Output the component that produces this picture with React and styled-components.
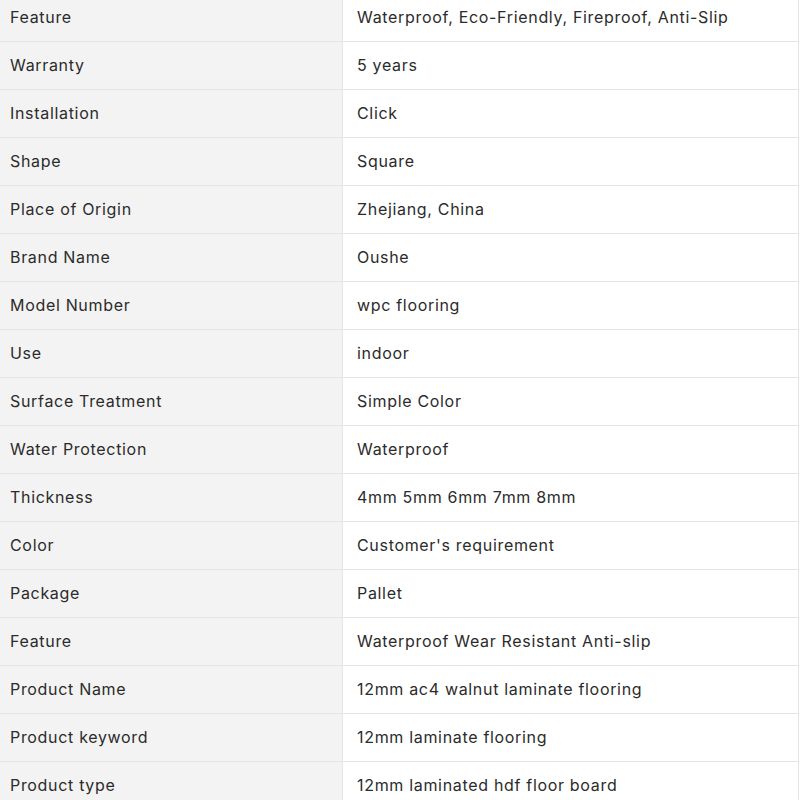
import React from "react";
import styled, { createGlobalStyle } from "styled-components";

const Global = createGlobalStyle`
  html, body { margin: 0; padding: 0; background: #fff; overflow: hidden; }
  body { font-family: Inter, "Noto Sans", sans-serif; }
`;

const Table = styled.div`
  width: 798px;
  margin-top: -6px;
  border-right: 1px solid #e6e6e6;
  display: grid;
  grid-template-columns: 343px 1fr;
`;

const Cell = styled.div`
  box-sizing: border-box;
  height: 48px;
  display: flex;
  align-items: center;
  padding-bottom: 1px;
  border-bottom: 1px solid #e4e4e4;
  font-size: 16px;
  font-weight: 400;
  letter-spacing: 0.68px;
  color: #2b2b2b;
  background: ${(p) => (p.$label ? "#f3f3f3" : "#fff")};
  padding-left: ${(p) => (p.$label ? "10px" : "14px")};
  border-right: ${(p) => (p.$label ? "1px solid #e6e6e6" : "none")};
  white-space: nowrap;
`;

const rows = [
  ["Feature", "Waterproof, Eco-Friendly, Fireproof, Anti-Slip"],
  ["Warranty", "5 years"],
  ["Installation", "Click"],
  ["Shape", "Square"],
  ["Place of Origin", "Zhejiang, China"],
  ["Brand Name", "Oushe"],
  ["Model Number", "wpc flooring"],
  ["Use", "indoor"],
  ["Surface Treatment", "Simple Color"],
  ["Water Protection", "Waterproof"],
  ["Thickness", "4mm 5mm 6mm 7mm 8mm"],
  ["Color", "Customer's requirement"],
  ["Package", "Pallet"],
  ["Feature", "Waterproof Wear Resistant Anti-slip"],
  ["Product Name", "12mm ac4 walnut laminate flooring"],
  ["Product keyword", "12mm laminate flooring"],
  ["Product type", "12mm laminated hdf floor board"],
];

export default function App() {
  return (
    <>
      <Global />
      <Table>
        {rows.map(([k, v], i) => (
          <React.Fragment key={i}>
            <Cell $label>{k}</Cell>
            <Cell>{v}</Cell>
          </React.Fragment>
        ))}
      </Table>
    </>
  );
}
